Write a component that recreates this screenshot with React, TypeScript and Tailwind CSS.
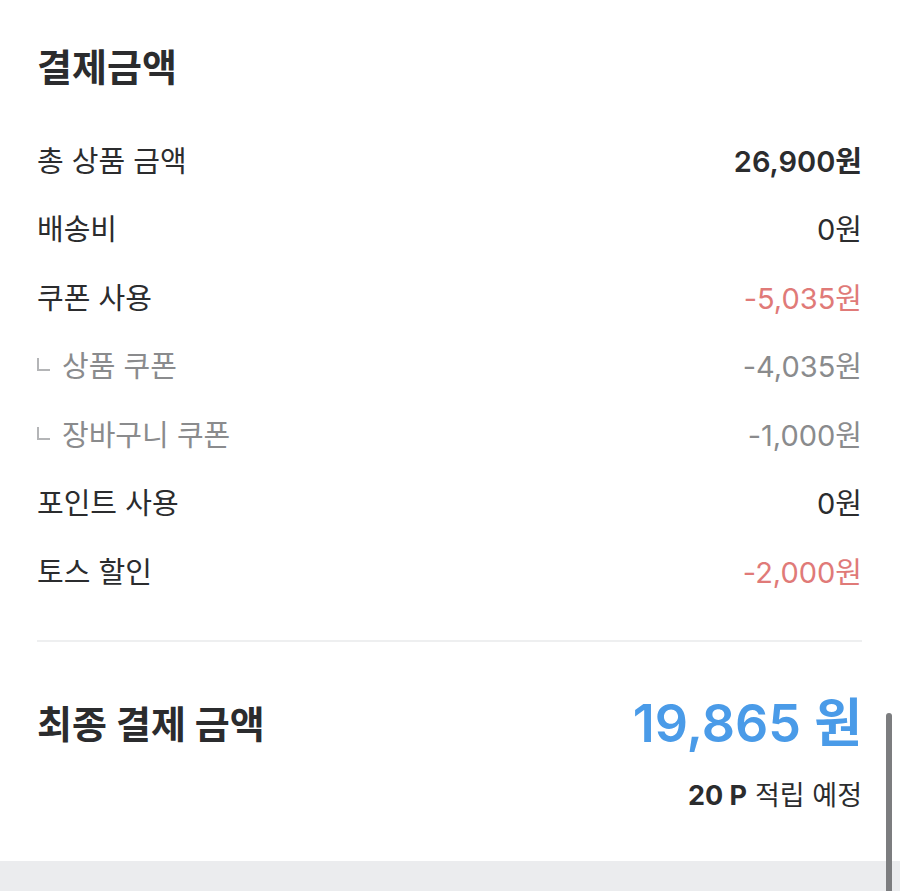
import React from "react";

const font = { fontFamily: "Inter, 'Noto Sans CJK KR', sans-serif" };

type Row = { label: string; value: string; kind: "normal" | "bold" | "red" | "sub" };

const rows: Row[] = [
  { label: "총 상품 금액", value: "26,900원", kind: "bold" },
  { label: "배송비", value: "0원", kind: "normal" },
  { label: "쿠폰 사용", value: "-5,035원", kind: "red" },
  { label: "상품 쿠폰", value: "-4,035원", kind: "sub" },
  { label: "장바구니 쿠폰", value: "-1,000원", kind: "sub" },
  { label: "포인트 사용", value: "0원", kind: "normal" },
  { label: "토스 할인", value: "-2,000원", kind: "red" },
];

export default function App() {
  return (
    <div className="relative w-[900px] h-[891px] bg-white overflow-hidden" style={font}>
      <div className="pl-[37px] pr-[38px] pt-[43px]">
        <h1 className="text-[38px] leading-[48px] font-bold text-[#2b2c2e]">결제금액</h1>
        <div className="mt-[36px]">
          {rows.map((r) => (
            <div key={r.label} className="h-[68.5px] flex items-center justify-between text-[29px]">
              {r.kind === "sub" ? (
                <div className="flex items-center text-[#8a8b8d]">
                  <span className="inline-block w-[13px] h-[13px] border-l-[2px] border-b-[2px] border-[#b4b5b7] mr-[12px] mt-[-4px]" />
                  <span>{r.label}</span>
                </div>
              ) : (
                <span className="text-[#2b2c2e]">{r.label}</span>
              )}
              <span
                className={
                  r.kind === "bold"
                    ? "font-semibold text-[#2b2c2e]"
                    : r.kind === "red"
                    ? "text-[#e07a78]"
                    : r.kind === "sub"
                    ? "text-[#8a8b8d]"
                    : "text-[#2b2c2e]"
                }
              >
                {r.value}
              </span>
            </div>
          ))}
        </div>
        <div className="mt-[33px] h-[2px] bg-[#eeeff0]" />
        <div className="mt-[57px] flex items-center justify-between h-[50px]">
          <span className="text-[38px] font-bold text-[#2b2c2e] leading-[50px]">최종 결제 금액</span>
          <span className="text-[52px] font-semibold text-[#4a9be8] leading-[50px]">19,865 원</span>
        </div>
        <div className="mt-[32px] flex justify-end text-[27px] leading-[30px] text-[#2b2c2e]">
          <span className="font-bold mr-[8px]">20 P</span>
          <span>적립 예정</span>
        </div>
      </div>
      <div className="absolute left-0 right-0 top-[861px] h-[30px] bg-[#ebecee]" />
      <div className="absolute left-[886px] top-[713px] w-[6px] h-[190px] rounded-full bg-[#7c7d7f]" />
    </div>
  );
}
